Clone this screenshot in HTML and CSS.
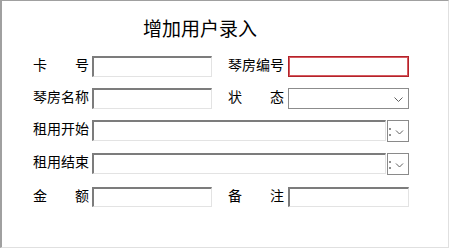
FILE: index.html
```html
<!DOCTYPE html>
<html>
<head>
<meta charset="UTF-8">
  <title>增加用户录入</title>
  <link rel="stylesheet" href="styles.css">
</head>
<body>
  <div class="frame">
    <h1 class="title">增加用户录入</h1>

    <div class="form">
      <div class="row">
        <label class="lbl"><span>卡</span><span>号</span></label>
        <input type="text" class="field">
        <label class="lbl lbl-2">琴房编号</label>
        <input type="text" class="field field-wide field-error">
      </div>

      <div class="row">
        <label class="lbl">琴房名称</label>
        <input type="text" class="field">
        <label class="lbl lbl-2"><span>状</span><span>态</span></label>
        <div class="select">
          <svg width="9" height="5" viewBox="0 0 9 5"><path d="M0.5 0.5 L4.5 4.5 L8.5 0.5" fill="none" stroke="#606060" stroke-width="1"/></svg>
        </div>
      </div>

      <div class="row row-date">
        <label class="lbl">租用开始</label>
        <div class="date">
          <input type="text" class="field field-date">
          <div class="date-btn">
            <svg width="20" height="20" viewBox="0 0 20 20">
              <rect x="1.5" y="7" width="1" height="2" fill="#222"/>
              <rect x="1.5" y="13" width="1" height="2" fill="#222"/>
              <path d="M8 9.5 L11.5 13 L15 9.5" fill="none" stroke="#606060" stroke-width="1"/>
            </svg>
          </div>
        </div>
      </div>

      <div class="row row-date">
        <label class="lbl">租用结束</label>
        <div class="date">
          <input type="text" class="field field-date">
          <div class="date-btn">
            <svg width="20" height="20" viewBox="0 0 20 20">
              <rect x="1.5" y="7" width="1" height="2" fill="#222"/>
              <rect x="1.5" y="13" width="1" height="2" fill="#222"/>
              <path d="M8 9.5 L11.5 13 L15 9.5" fill="none" stroke="#606060" stroke-width="1"/>
            </svg>
          </div>
        </div>
      </div>

      <div class="row row-last">
        <label class="lbl"><span>金</span><span>额</span></label>
        <input type="text" class="field">
        <label class="lbl lbl-2"><span>备</span><span>注</span></label>
        <input type="text" class="field field-wide">
      </div>
    </div>
  </div>
</body>
</html>
```

FILE: styles.css
```css
    body {
      margin: 0;
      font-family: "Noto Sans CJK SC", "Noto Sans", sans-serif;
      color: #000;
      background: #fff;
    }

    .frame {
      width: 449px;
      height: 248px;
      box-sizing: border-box;
      border-top: 1px solid #a0a0a0;
      border-left: 2px solid #a0a0a0;
      border-right: 1px solid #e0e0e0;
      border-bottom: 1px solid #e0e0e0;
      padding: 17px 0 0 31px;
    }

    .title {
      font-size: 19px;
      font-weight: normal;
      line-height: 19px;
      margin: 0 0 19px 110px;
    }

    .form {
      display: flex;
      flex-direction: column;
      gap: 11px;
    }

    .row {
      display: flex;
      align-items: flex-start;
      height: 21px;
    }

    .row-date {
      height: 22px;
    }

    .row-last {
      margin-top: 1px;
      height: 20px;
    }

    .lbl {
      width: 56px;
      display: flex;
      justify-content: space-between;
      font-size: 14px;
      line-height: 14px;
      margin: 1px 3px 0 0;
    }

    .lbl-2 {
      margin-left: 16px;
      margin-right: 4px;
    }

    .field {
      width: 120px;
      height: 21px;
      box-sizing: border-box;
      margin: 0;
      padding: 0;
      border-style: solid;
      border-width: 2px 1px 1px 2px;
      border-color: #7c7c7c #e3e3e3 #e3e3e3 #7c7c7c;
      background: #fff;
      outline: none;
    }

    .row-last .field {
      height: 20px;
    }

    .field-wide {
      width: 121px;
    }

    .field-error {
      border: 1px solid #b3232a;
      box-shadow: inset 0 0 0 1px #d65a60;
    }

    .select {
      width: 121px;
      height: 21px;
      box-sizing: border-box;
      border: 1px solid #8c8c8c;
      display: flex;
      justify-content: flex-end;
      align-items: center;
      padding: 1px 5px 0 0;
    }

    .date {
      width: 317px;
      display: flex;
      gap: 1px;
    }

    .field-date {
      flex: 1;
      height: 21px;
    }

    .date-btn {
      width: 22px;
      height: 22px;
      box-sizing: border-box;
      border: 1px solid #8a8a8a;
      background: #fff;
    }

    .date-btn svg {
      display: block;
    }
```
